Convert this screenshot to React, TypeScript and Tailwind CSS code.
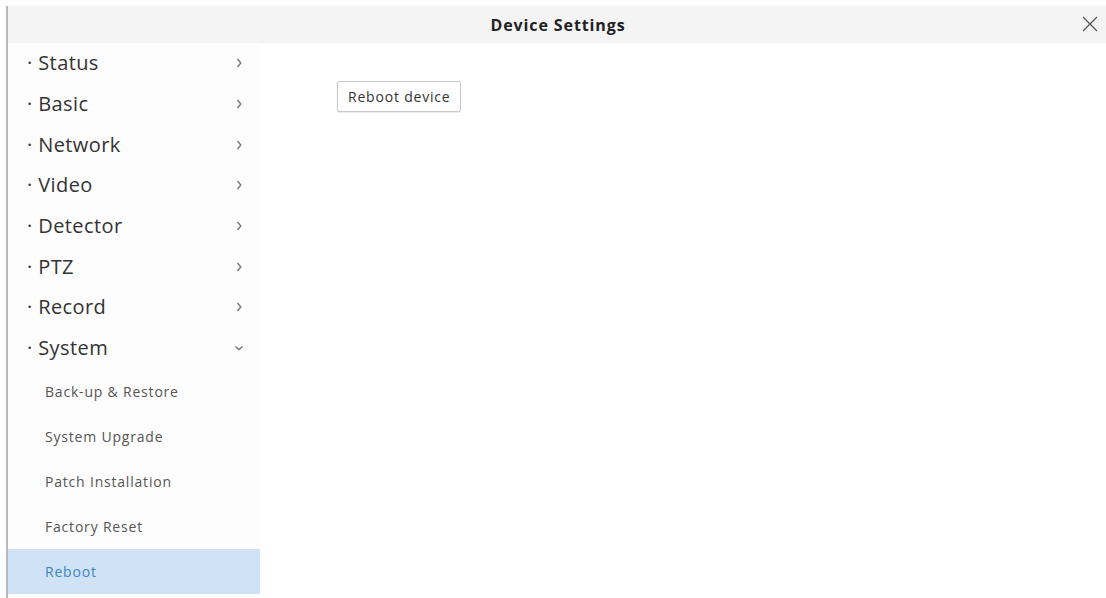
import React from "react";

const menu = ["Status", "Basic", "Network", "Video", "Detector", "PTZ", "Record"];
const sub = ["Back-up & Restore", "System Upgrade", "Patch Installation", "Factory Reset"];

function Chevron({ down = false }: { down?: boolean }) {
  return (
    <svg width="10" height="10" viewBox="0 0 10 10" className="text-[#777]">
      {down ? (
        <path d="M1.5 3.5 L5 6.5 L8.5 3.5" fill="none" stroke="currentColor" strokeWidth="1.4" />
      ) : (
        <path d="M3.5 1 L6.8 5 L3.5 9" fill="none" stroke="currentColor" strokeWidth="1.4" />
      )}
    </svg>
  );
}

export default function App() {
  return (
    <div
      className="w-[1106px] h-[598px] bg-white overflow-hidden pt-[6px] pl-[6px]"
      style={{ fontFamily: '"Open Sans", "Noto Sans", sans-serif' }}
    >
      <div className="h-full border-l-2 border-[#b8b8b8] flex flex-col">
        <div className="h-[37px] bg-[#f4f4f4] flex items-center relative shrink-0">
          <div className="flex-1 text-center text-[16px] font-bold text-[#222] tracking-[0.9px] pl-[2px]">
            Device Settings
          </div>
          <svg
            width="16"
            height="16"
            viewBox="0 0 16 16"
            className="absolute right-[8px] top-[10px]"
          >
            <path d="M1 1 L15 15 M15 1 L1 15" stroke="#555" strokeWidth="1.3" />
          </svg>
        </div>
        <div className="flex flex-1">
          <div className="w-[252px] bg-[#fdfdfd] flex flex-col">
            {menu.map((m) => (
              <div key={m} className="h-[40.7px] flex items-center justify-between pl-[19px] pr-[16px]">
                <span className="text-[20px] text-[#333] tracking-[0.4px]">· {m}</span>
                <Chevron />
              </div>
            ))}
            <div className="h-[40.7px] flex items-center justify-between pl-[19px] pr-[16px]">
              <span className="text-[20px] text-[#333] tracking-[0.4px]">· System</span>
              <Chevron down />
            </div>
            {sub.map((s) => (
              <div key={s} className="h-[45px] flex items-center pl-[37px] text-[14px] tracking-[0.8px] text-[#555]">
                {s}
              </div>
            ))}
            <div className="h-[45px] flex items-center pl-[37px] text-[14px] tracking-[0.8px] text-[#3d86c0] bg-[#cfe2f6]">
              Reboot
            </div>
          </div>
          <div className="flex-1 pt-[38px] pl-[77px]">
            <button className="h-[31px] px-[10px] border border-[#c8c8c8] rounded-[2px] bg-white text-[14px] tracking-[0.8px] text-[#333] shadow-[0_1px_1px_rgba(0,0,0,0.08)]">
              Reboot device
            </button>
          </div>
        </div>
      </div>
    </div>
  );
}
